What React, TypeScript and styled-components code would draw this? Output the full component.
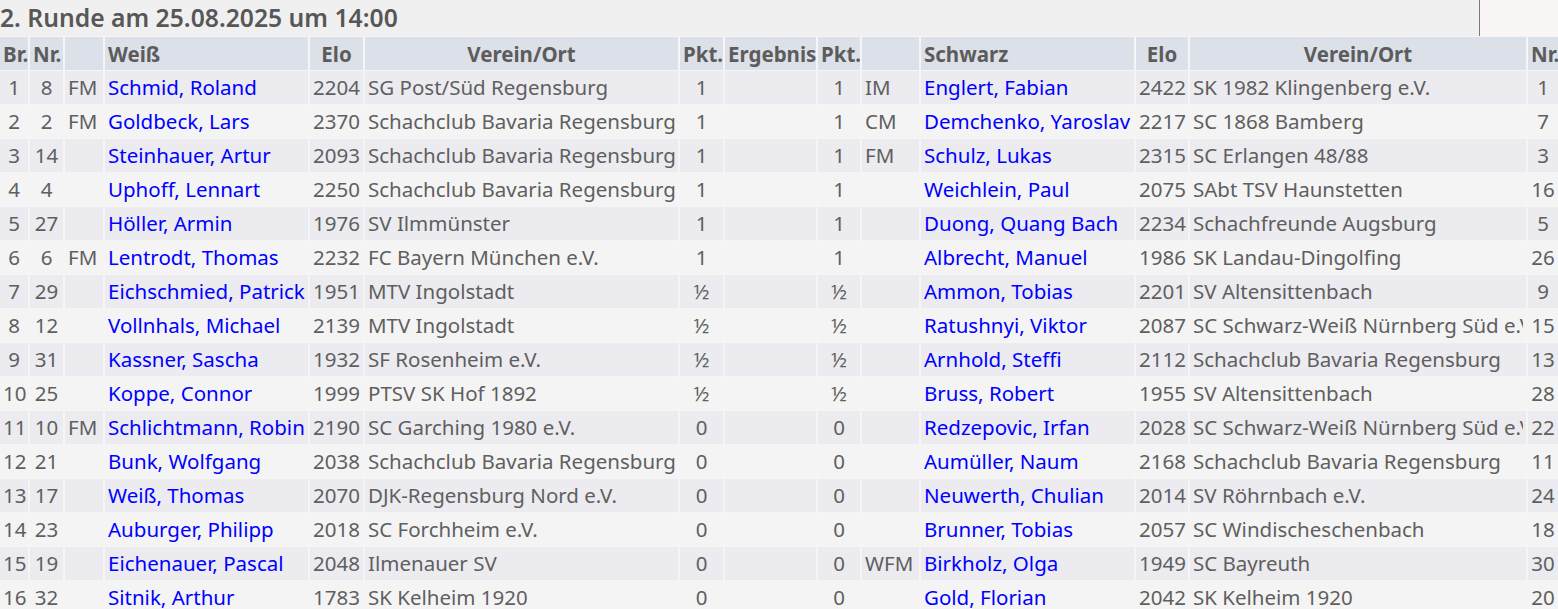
import styled, { createGlobalStyle } from 'styled-components';

const GlobalStyle = createGlobalStyle`
    html, body {
        margin: 0;
        padding: 0;
        background: #f0f0f0;
        overflow: hidden;
        font-family: "Noto Sans", "Open Sans", sans-serif;
    }
`;

const Page = styled.div`
    width: 1558px;
    overflow: hidden;
`;

const TopBar = styled.div`
    display: flex;
    height: 36px;
`;

const Title = styled.h2`
    flex: 0 0 1479px;
    margin: 0;
    font-size: 24.7px;
    font-weight: 600;
    line-height: 35px;
    color: #575757;
    white-space: nowrap;
`;

const SidePanel = styled.div`
    flex: 1;
    border-left: 1px solid #7a7a7a;
    background: #f9f6f5;
`;

const Table = styled.table`
    table-layout: fixed;
    width: 1562px;
    margin-left: -2px;
    border-collapse: separate;
    border-spacing: 2px 1px;
    background: #f5f5f5;
    font-size: 20.5px;
    color: #5f5f5f;
`;

const HeadCell = styled.th<{ $align?: string }>`
    height: 33px;
    padding: 0 3px;
    background: #dce0e8;
    color: #5c5c5c;
    font-weight: 700;
    text-align: ${p => p.$align || 'center'};
    white-space: nowrap;
    overflow: hidden;
`;

const Row = styled.tr<{ $odd: boolean }>`
    background: ${p => (p.$odd ? '#ebebf0' : '#f4f4f4')};
`;

const Cell = styled.td<{ $align?: string }>`
    height: 33px;
    padding: 0 3px;
    line-height: 31px;
    text-align: ${p => p.$align || 'left'};
    white-space: nowrap;
    overflow: hidden;
`;

const NameCell = styled(Cell)`
    color: #0000ff;
`;

const Clip = styled.div`
    overflow: hidden;
    white-space: nowrap;
`;

const widths = [28, 33, 38, 203, 53, 313, 43, 91, 42, 57, 213, 52, 336, 30];

type Pairing = [number, number, string, string, number, string, string, string, string, string, number, string, number];

const rows: Pairing[] = [
    [1, 8, 'FM', 'Schmid, Roland', 2204, 'SG Post/Süd Regensburg', '1', '1', 'IM', 'Englert, Fabian', 2422, 'SK 1982 Klingenberg e.V.', 1],
    [2, 2, 'FM', 'Goldbeck, Lars', 2370, 'Schachclub Bavaria Regensburg', '1', '1', 'CM', 'Demchenko, Yaroslav', 2217, 'SC 1868 Bamberg', 7],
    [3, 14, '', 'Steinhauer, Artur', 2093, 'Schachclub Bavaria Regensburg', '1', '1', 'FM', 'Schulz, Lukas', 2315, 'SC Erlangen 48/88', 3],
    [4, 4, '', 'Uphoff, Lennart', 2250, 'Schachclub Bavaria Regensburg', '1', '1', '', 'Weichlein, Paul', 2075, 'SAbt TSV Haunstetten', 16],
    [5, 27, '', 'Höller, Armin', 1976, 'SV Ilmmünster', '1', '1', '', 'Duong, Quang Bach', 2234, 'Schachfreunde Augsburg', 5],
    [6, 6, 'FM', 'Lentrodt, Thomas', 2232, 'FC Bayern München e.V.', '1', '1', '', 'Albrecht, Manuel', 1986, 'SK Landau-Dingolfing', 26],
    [7, 29, '', 'Eichschmied, Patrick', 1951, 'MTV Ingolstadt', '½', '½', '', 'Ammon, Tobias', 2201, 'SV Altensittenbach', 9],
    [8, 12, '', 'Vollnhals, Michael', 2139, 'MTV Ingolstadt', '½', '½', '', 'Ratushnyi, Viktor', 2087, 'SC Schwarz-Weiß Nürnberg Süd e.V.', 15],
    [9, 31, '', 'Kassner, Sascha', 1932, 'SF Rosenheim e.V.', '½', '½', '', 'Arnhold, Steffi', 2112, 'Schachclub Bavaria Regensburg', 13],
    [10, 25, '', 'Koppe, Connor', 1999, 'PTSV SK Hof 1892', '½', '½', '', 'Bruss, Robert', 1955, 'SV Altensittenbach', 28],
    [11, 10, 'FM', 'Schlichtmann, Robin', 2190, 'SC Garching 1980 e.V.', '0', '0', '', 'Redzepovic, Irfan', 2028, 'SC Schwarz-Weiß Nürnberg Süd e.V.', 22],
    [12, 21, '', 'Bunk, Wolfgang', 2038, 'Schachclub Bavaria Regensburg', '0', '0', '', 'Aumüller, Naum', 2168, 'Schachclub Bavaria Regensburg', 11],
    [13, 17, '', 'Weiß, Thomas', 2070, 'DJK-Regensburg Nord e.V.', '0', '0', '', 'Neuwerth, Chulian', 2014, 'SV Röhrnbach e.V.', 24],
    [14, 23, '', 'Auburger, Philipp', 2018, 'SC Forchheim e.V.', '0', '0', '', 'Brunner, Tobias', 2057, 'SC Windischeschenbach', 18],
    [15, 19, '', 'Eichenauer, Pascal', 2048, 'Ilmenauer SV', '0', '0', 'WFM', 'Birkholz, Olga', 1949, 'SC Bayreuth', 30],
    [16, 32, '', 'Sitnik, Arthur', 1783, 'SK Kelheim 1920', '0', '0', '', 'Gold, Florian', 2042, 'SK Kelheim 1920', 20],
];

export default function App(): JSX.Element {
    return (
        <Page>
            <GlobalStyle />
            <TopBar>
                <Title>2. Runde am 25.08.2025 um 14:00</Title>
                <SidePanel />
            </TopBar>
            <Table>
                <colgroup>
                    {widths.map((w, i) => <col key={i} style={{ width: w }} />)}
                </colgroup>
                <thead>
                    <tr>
                        <HeadCell>Br.</HeadCell>
                        <HeadCell>Nr.</HeadCell>
                        <HeadCell />
                        <HeadCell $align="left">Weiß</HeadCell>
                        <HeadCell>Elo</HeadCell>
                        <HeadCell>Verein/Ort</HeadCell>
                        <HeadCell>Pkt.</HeadCell>
                        <HeadCell>Ergebnis</HeadCell>
                        <HeadCell>Pkt.</HeadCell>
                        <HeadCell />
                        <HeadCell $align="left">Schwarz</HeadCell>
                        <HeadCell>Elo</HeadCell>
                        <HeadCell>Verein/Ort</HeadCell>
                        <HeadCell>Nr.</HeadCell>
                    </tr>
                </thead>
                <tbody>
                    {rows.map((r, i) => (
                        <Row key={r[0]} $odd={i % 2 === 0}>
                            <Cell $align="center">{r[0]}</Cell>
                            <Cell $align="center">{r[1]}</Cell>
                            <Cell>{r[2]}</Cell>
                            <NameCell>{r[3]}</NameCell>
                            <Cell $align="right">{r[4]}</Cell>
                            <Cell><Clip>{r[5]}</Clip></Cell>
                            <Cell $align="center">{r[6]}</Cell>
                            <Cell />
                            <Cell $align="center">{r[7]}</Cell>
                            <Cell>{r[8]}</Cell>
                            <NameCell>{r[9]}</NameCell>
                            <Cell $align="right">{r[10]}</Cell>
                            <Cell><Clip>{r[11]}</Clip></Cell>
                            <Cell $align="center">{r[12]}</Cell>
                        </Row>
                    ))}
                </tbody>
            </Table>
        </Page>
    );
}
